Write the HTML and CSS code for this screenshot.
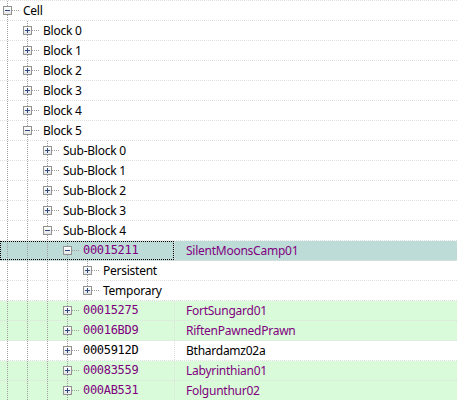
FILE: index.html
```html
<!DOCTYPE html>
<html lang="en">
<head>
  <meta charset="UTF-8" />
  <meta name="viewport" content="width=device-width, initial-scale=1.0" />
  <title>Cell tree</title>
  <link rel="stylesheet" href="styles.css">
</head>
<body>
  <div class="tree-list">
    <div class="row">
      <div class="tree"><span class="node tee"><span class="box minus"></span></span><span class="label">Cell</span></div>
    </div>
    <div class="row">
      <div class="tree"><span class="guide line"></span><span class="node tee"><span class="box plus"></span></span><span class="label">Block 0</span></div>
    </div>
    <div class="row">
      <div class="tree"><span class="guide line"></span><span class="node tee"><span class="box plus"></span></span><span class="label">Block 1</span></div>
    </div>
    <div class="row">
      <div class="tree"><span class="guide line"></span><span class="node tee"><span class="box plus"></span></span><span class="label">Block 2</span></div>
    </div>
    <div class="row">
      <div class="tree"><span class="guide line"></span><span class="node tee"><span class="box plus"></span></span><span class="label">Block 3</span></div>
    </div>
    <div class="row">
      <div class="tree"><span class="guide line"></span><span class="node tee"><span class="box plus"></span></span><span class="label">Block 4</span></div>
    </div>
    <div class="row">
      <div class="tree"><span class="guide line"></span><span class="node tee"><span class="box minus"></span></span><span class="label">Block 5</span></div>
    </div>
    <div class="row">
      <div class="tree"><span class="guide line"></span><span class="guide line"></span><span class="node tee"><span class="box plus"></span></span><span class="label">Sub-Block 0</span></div>
    </div>
    <div class="row">
      <div class="tree"><span class="guide line"></span><span class="guide line"></span><span class="node tee"><span class="box plus"></span></span><span class="label">Sub-Block 1</span></div>
    </div>
    <div class="row">
      <div class="tree"><span class="guide line"></span><span class="guide line"></span><span class="node tee"><span class="box plus"></span></span><span class="label">Sub-Block 2</span></div>
    </div>
    <div class="row">
      <div class="tree"><span class="guide line"></span><span class="guide line"></span><span class="node tee"><span class="box plus"></span></span><span class="label">Sub-Block 3</span></div>
    </div>
    <div class="row">
      <div class="tree"><span class="guide line"></span><span class="guide line"></span><span class="node tee"><span class="box minus"></span></span><span class="label">Sub-Block 4</span></div>
    </div>
    <div class="row selected">
      <div class="tree"><span class="guide line"></span><span class="guide line"></span><span class="guide line"></span><span class="node tee"><span class="box minus"></span></span><span class="label form-id">00015211</span></div>
      <div class="name">SilentMoonsCamp01</div>
    </div>
    <div class="row">
      <div class="tree"><span class="guide line"></span><span class="guide line"></span><span class="guide line"></span><span class="guide line"></span><span class="node tee"><span class="box plus"></span></span><span class="label">Persistent</span></div>
    </div>
    <div class="row">
      <div class="tree"><span class="guide line"></span><span class="guide line"></span><span class="guide line"></span><span class="guide line"></span><span class="node last"><span class="box plus"></span></span><span class="label">Temporary</span></div>
    </div>
    <div class="row override">
      <div class="tree"><span class="guide line"></span><span class="guide line"></span><span class="guide line"></span><span class="node tee"><span class="box plus"></span></span><span class="label form-id">00015275</span></div>
      <div class="name">FortSungard01</div>
    </div>
    <div class="row override">
      <div class="tree"><span class="guide line"></span><span class="guide line"></span><span class="guide line"></span><span class="node tee"><span class="box plus"></span></span><span class="label form-id">00016BD9</span></div>
      <div class="name">RiftenPawnedPrawn</div>
    </div>
    <div class="row plain">
      <div class="tree"><span class="guide line"></span><span class="guide line"></span><span class="guide line"></span><span class="node tee"><span class="box plus"></span></span><span class="label form-id">0005912D</span></div>
      <div class="name">Bthardamz02a</div>
    </div>
    <div class="row override">
      <div class="tree"><span class="guide line"></span><span class="guide line"></span><span class="guide line"></span><span class="node tee"><span class="box plus"></span></span><span class="label form-id">00083559</span></div>
      <div class="name">Labyrinthian01</div>
    </div>
    <div class="row override">
      <div class="tree"><span class="guide line"></span><span class="guide line"></span><span class="guide line"></span><span class="node tee"><span class="box plus"></span></span><span class="label form-id">000AB531</span></div>
      <div class="name">Folgunthur02</div>
    </div>
  </div>
</body>
</html>
```

FILE: styles.css
```css
body {
  margin: 0;
  background: #fff;
  font-family: "Noto Sans", "Open Sans", sans-serif;
  font-size: 12px;
  letter-spacing: -0.25px;
  color: #000;
  overflow: hidden;
}
.tree-list {
  border-top: 1px dotted #e0e0e0;
}
.row {
  display: flex;
  height: 19px;
  border-bottom: 1px dotted #e0e0e0;
}
.row.override {
  background: #d9fbd9;
}
.row.selected {
  background: #bedcd7;
}
.tree {
  display: flex;
  align-items: stretch;
  width: 174px;
  flex: none;
  box-sizing: border-box;
}
.row.selected .tree {
  outline: 1px dotted #000;
  outline-offset: -1px;
}
.guide,
.node {
  width: 20px;
  flex: none;
  background-repeat: no-repeat;
}
.guide.line {
  background-image: repeating-linear-gradient(#a0a0a0 0 1px, transparent 1px 2px);
  background-size: 1px 100%;
  background-position: 7px 0;
}
.node {
  display: flex;
  align-items: center;
  background-image:
    repeating-linear-gradient(#a0a0a0 0 1px, transparent 1px 2px),
    repeating-linear-gradient(to right, #a0a0a0 0 1px, transparent 1px 2px);
  background-position: 7px 0, 12px 9px;
}
.node.tee {
  background-size: 1px 100%, 8px 1px;
}
.node.last {
  background-size: 1px 10px, 8px 1px;
}
.box {
  width: 7px;
  height: 7px;
  margin-left: 3px;
  border: 1px solid #929292;
  background-repeat: no-repeat;
}
.box.minus {
  background-image:
    linear-gradient(#2c4680, #2c4680),
    linear-gradient(#fff, #e4e4e4);
  background-size: 5px 1px, 100% 100%;
  background-position: center, 0 0;
}
.box.plus {
  background-image:
    linear-gradient(#2c4680, #2c4680),
    linear-gradient(#2c4680, #2c4680),
    linear-gradient(#fff, #e4e4e4);
  background-size: 5px 1px, 1px 5px, 100% 100%;
  background-position: center, center, 0 0;
}
.label {
  padding-left: 3px;
  line-height: 19px;
  white-space: nowrap;
}
.form-id {
  font-family: "DejaVu Sans Mono", monospace;
  font-size: 12px;
  letter-spacing: -0.3px;
  color: #800080;
}
.name {
  flex: 1;
  padding-left: 11px;
  line-height: 19px;
  color: #800080;
  border-left: 1px dotted #e0e0e0;
  white-space: nowrap;
}
.row.plain .form-id,
.row.plain .name {
  color: #000;
}
```
